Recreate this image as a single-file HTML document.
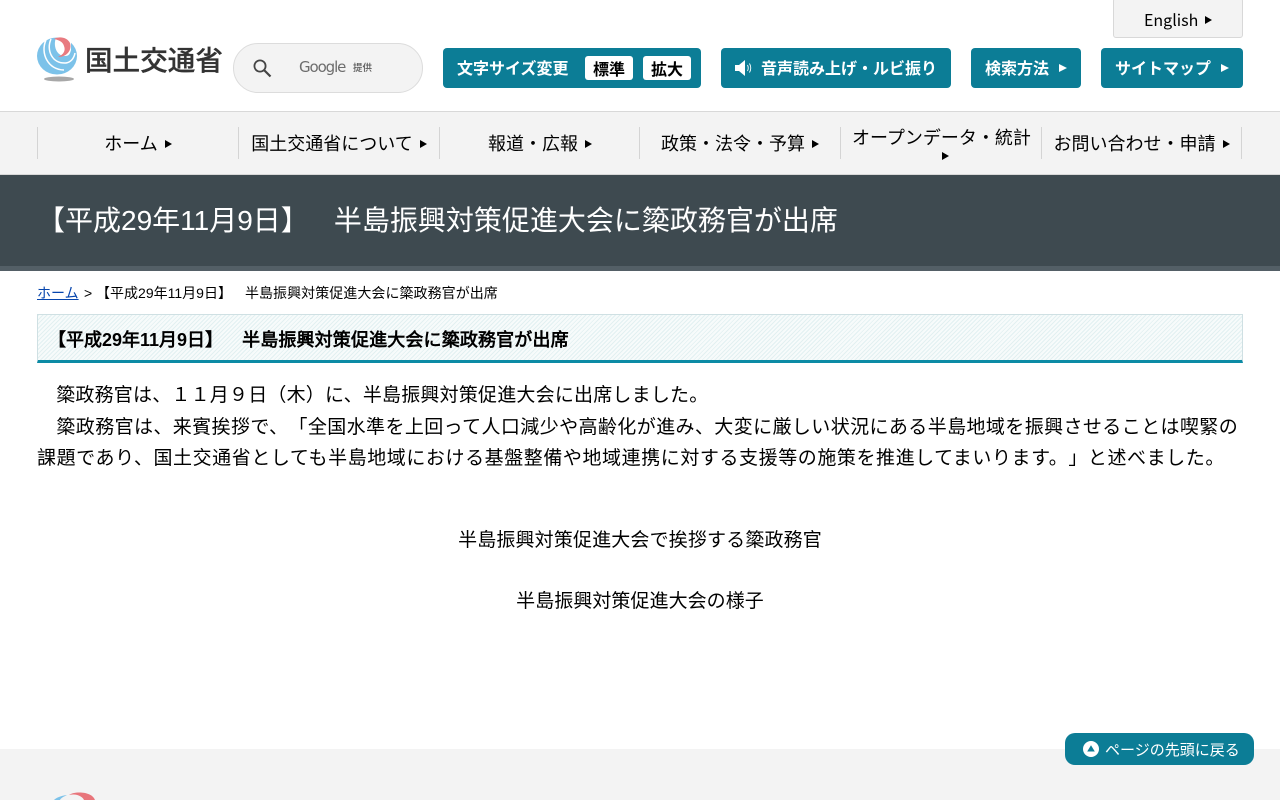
<!DOCTYPE html>
<html>
<head>
<meta charset="utf-8">
<title>【平成29年11月9日】 半島振興対策促進大会に簗政務官が出席</title>
<style>
*{box-sizing:border-box}
html,body{margin:0;padding:0;width:1280px;height:800px;overflow:hidden;background:#fff;color:#000}
body{position:relative;font-family:"Liberation Sans",sans-serif;text-spacing-trim:space-all}
.a{position:absolute;white-space:nowrap}
.n{font-family:"Noto Sans CJK JP",sans-serif}
.btn{position:absolute;top:48px;height:40px;background:#0c7d96;border-radius:4px;color:#fff;font:700 16px/38px "Noto Sans CJK JP",sans-serif;white-space:nowrap}
.tri{display:inline-block;width:0;height:0;border-left:7px solid currentColor;border-top:4.5px solid transparent;border-bottom:4.5px solid transparent}
.wb{position:absolute;top:8px;width:48px;height:24px;background:#fff;border-radius:3px;color:#000;text-align:center;font:700 16px/24px "Noto Sans CJK JP",sans-serif}
.nav{position:absolute;top:127px;height:32px;width:201px;border-left:1px solid #d4d4d4;text-align:center;font:18px/34px "Liberation Sans",sans-serif;white-space:nowrap}
.l{position:absolute;left:37px;font-size:19px;line-height:32px;white-space:nowrap}
</style>
</head>
<body>
<svg class="a" style="left:36px;top:37px" width="44" height="46" viewBox="0 0 44 46">
<ellipse cx="21" cy="19" rx="20" ry="18.500" fill="#7cc2e9"/>
<path d="M10 3C4 16 12 33 28 33" fill="none" stroke="#fff" stroke-width="1.500"/>
<path d="M15 2C10 13 16 27 30 26C35 25 38 21 39 16" fill="none" stroke="#fff" stroke-width="1.500"/>
<path d="M20 1C17 8 20 19 29 19C33 19 34 17 35 13L35 4L28 0Z" fill="#fff"/>
<path d="M18 2C23-1 31 0 34 6C36 12 32 20 22 20C27 18 30 14 28 9C27 5 23 3 18 2Z" fill="#e87a80"/>
<ellipse cx="23" cy="42" rx="15" ry="2.500" fill="#a8a8a8"/>
</svg>
<div class="a n" lang="ja" style="left:85px;top:38px;font-size:27.500px;line-height:40px;font-weight:500;color:#333;letter-spacing:.1px;-webkit-text-stroke:.3px #333">国土交通省</div>

<div class="a" style="left:233px;top:43px;width:190px;height:50px;background:#f3f3f3;border:1px solid #dcdcdc;border-radius:25px"></div>
<svg class="a" style="left:251px;top:57px" width="22" height="22" viewBox="0 0 22 22"><circle cx="9" cy="9" r="5.600" fill="none" stroke="#444" stroke-width="1.800"/><path d="M13 13L19.500 19.500" stroke="#444" stroke-width="2.200"/></svg>
<div class="a" style="left:299px;top:57px;font:15px/20px 'DejaVu Sans',sans-serif;color:#6d6d6d;letter-spacing:-1.100px">Google</div>
<div class="a n" lang="ja" style="left:353px;top:60px;font-size:9.500px;line-height:14px;color:#555;font-weight:500">提供</div>

<div class="a n" style="left:1113px;top:-2px;width:130px;height:40px;background:#f3f3f3;border:1px solid #d8d8d8;border-radius:3px;font-size:16px;line-height:40px;padding-left:30px">English <span class="tri" style="margin-left:3px;vertical-align:2px"></span></div>

<div class="btn" lang="ja" style="left:443px;width:258px;padding-left:14px">文字サイズ変更
<span class="wb" style="left:142px">標準</span><span class="wb" style="left:200px">拡大</span></div>
<div class="btn" lang="ja" style="left:721px;width:230px;padding-left:40px">
<svg class="a" style="left:13px;top:11px" width="20" height="18" viewBox="0 0 20 18"><path d="M1 6H5L11 1V17L5 12H1Z" fill="#fff"/><path d="M13.500 6Q15 9 13.500 12M15.500 4.500Q18 9 15.500 13.500" fill="none" stroke="#fff" stroke-width=".9"/></svg>音声読み上げ・ルビ振り</div>
<div class="btn" lang="ja" style="left:971px;width:110px;padding-left:14px">検索方法<span class="tri" style="position:absolute;left:88px;top:15.500px;border-left-width:8px"></span></div>
<div class="btn" lang="ja" style="left:1101px;width:142px;padding-left:14px">サイトマップ<span class="tri" style="position:absolute;left:120px;top:15.500px;border-left-width:8px"></span></div>

<div class="a" style="left:0;top:111px;width:1280px;height:64px;background:#f3f3f3;border-top:1px solid #d8d8d8;border-bottom:1px solid #d8d8d8"></div>
<div class="nav" style="left:37px">ホーム <span class="tri" style="margin-left:2px;vertical-align:2px"></span></div>
<div class="nav" style="left:238px">国土交通省について <span class="tri" style="margin-left:2px;vertical-align:2px"></span></div>
<div class="nav" style="left:439px">報道・広報 <span class="tri" style="margin-left:2px;vertical-align:2px"></span></div>
<div class="nav" style="left:639px">政策・法令・予算 <span class="tri" style="margin-left:2px;vertical-align:2px"></span></div>
<div class="nav" style="left:840px;line-height:22px"><span style="position:absolute;left:11px;top:0">オープンデータ・統計</span><span class="tri" style="position:absolute;left:101px;top:25px"></span></div>
<div class="nav" style="left:1041px;width:201px;border-right:1px solid #d4d4d4">お問い合わせ・申請 <span class="tri" style="margin-left:2px;vertical-align:2px"></span></div>

<div class="a" style="left:0;top:175px;width:1280px;height:96px;background:#3e4a50;border-bottom:5px solid #535f66"></div>
<div class="a" style="left:37px;top:202px;color:#fff;font-size:28px;line-height:38px">【平成29年11月9日】<span style="margin-left:-3px">　</span>半島振興対策促進大会に簗政務官が出席</div>

<div class="a" style="left:37px;top:283px;font-size:14px;line-height:20px"><span style="color:#0645ad;text-decoration:underline">ホーム</span> <span style="margin-left:1.500px">&gt;</span> 【平成29年11月9日】<span style="margin-left:-1px">　</span><span style="letter-spacing:.05px">半島振興対策促進大会に簗政務官が出席</span></div>

<div class="a" style="left:37px;top:314px;width:1206px;height:49px;border:1px solid #cfe0e3;border-bottom:3px solid #0c8ba5;background:repeating-linear-gradient(135deg,#e2f0f1 0 1px,#f7fbfb 1px 3px)"></div>
<div class="a" style="left:48px;top:327px;font-size:18px;line-height:26px;font-weight:bold">【平成29年11月9日】<span style="margin-left:1px">　</span><span style="letter-spacing:.15px">半島振興対策促進大会に簗政務官が出席</span></div>

<div class="l" style="top:380px;letter-spacing:.2px">　簗政務官は、１１月９日（木）に、半島振興対策促進大会に出席しました。</div>
<div class="l" style="top:412px;letter-spacing:.4px">　簗政務官は、来賓挨拶で、「全国水準を上回って人口減少や高齢化が進み、大変に厳しい状況にある半島地域を振興させることは喫緊の</div>
<div class="l" style="top:443px;letter-spacing:.57px">課題であり、国土交通省としても半島地域における基盤整備や地域連携に対する支援等の施策を推進してまいります。」と述べました。</div>

<div class="a" style="left:37px;top:525px;width:1206px;text-align:center;font-size:19px;line-height:31px;letter-spacing:.15px">半島振興対策促進大会で挨拶する簗政務官</div>
<div class="a" style="left:37px;top:586px;width:1206px;text-align:center;font-size:19px;line-height:31px;letter-spacing:.05px">半島振興対策促進大会の様子</div>

<div class="a" style="left:0;top:749px;width:1280px;height:51px;background:#f3f3f3"></div>
<svg class="a" style="left:36px;top:792px" width="64" height="8" viewBox="0 0 64 8"><path d="M33 3C38-1 56-1 59 8H48C47 5 41 1 33 3Z" fill="#e8757b"/><path d="M18 8C20 6 24 4 31 3C27 5 25 6 24 8Z" fill="#7cc2e9"/></svg>

<div class="a n" lang="ja" style="left:1065px;top:733px;width:189px;height:32px;background:#0c7d96;border-radius:10px;color:#fff;font-size:15px;line-height:33px;padding-left:40px">ページの先頭に戻る</div>
<svg class="a" style="left:1083px;top:741px" width="16" height="16" viewBox="0 0 16 16"><circle cx="8" cy="8" r="8" fill="#fff"/><path d="M8 4.300L11.800 10.500H4.200Z" fill="#0c7d96"/></svg>
</body>
</html>
